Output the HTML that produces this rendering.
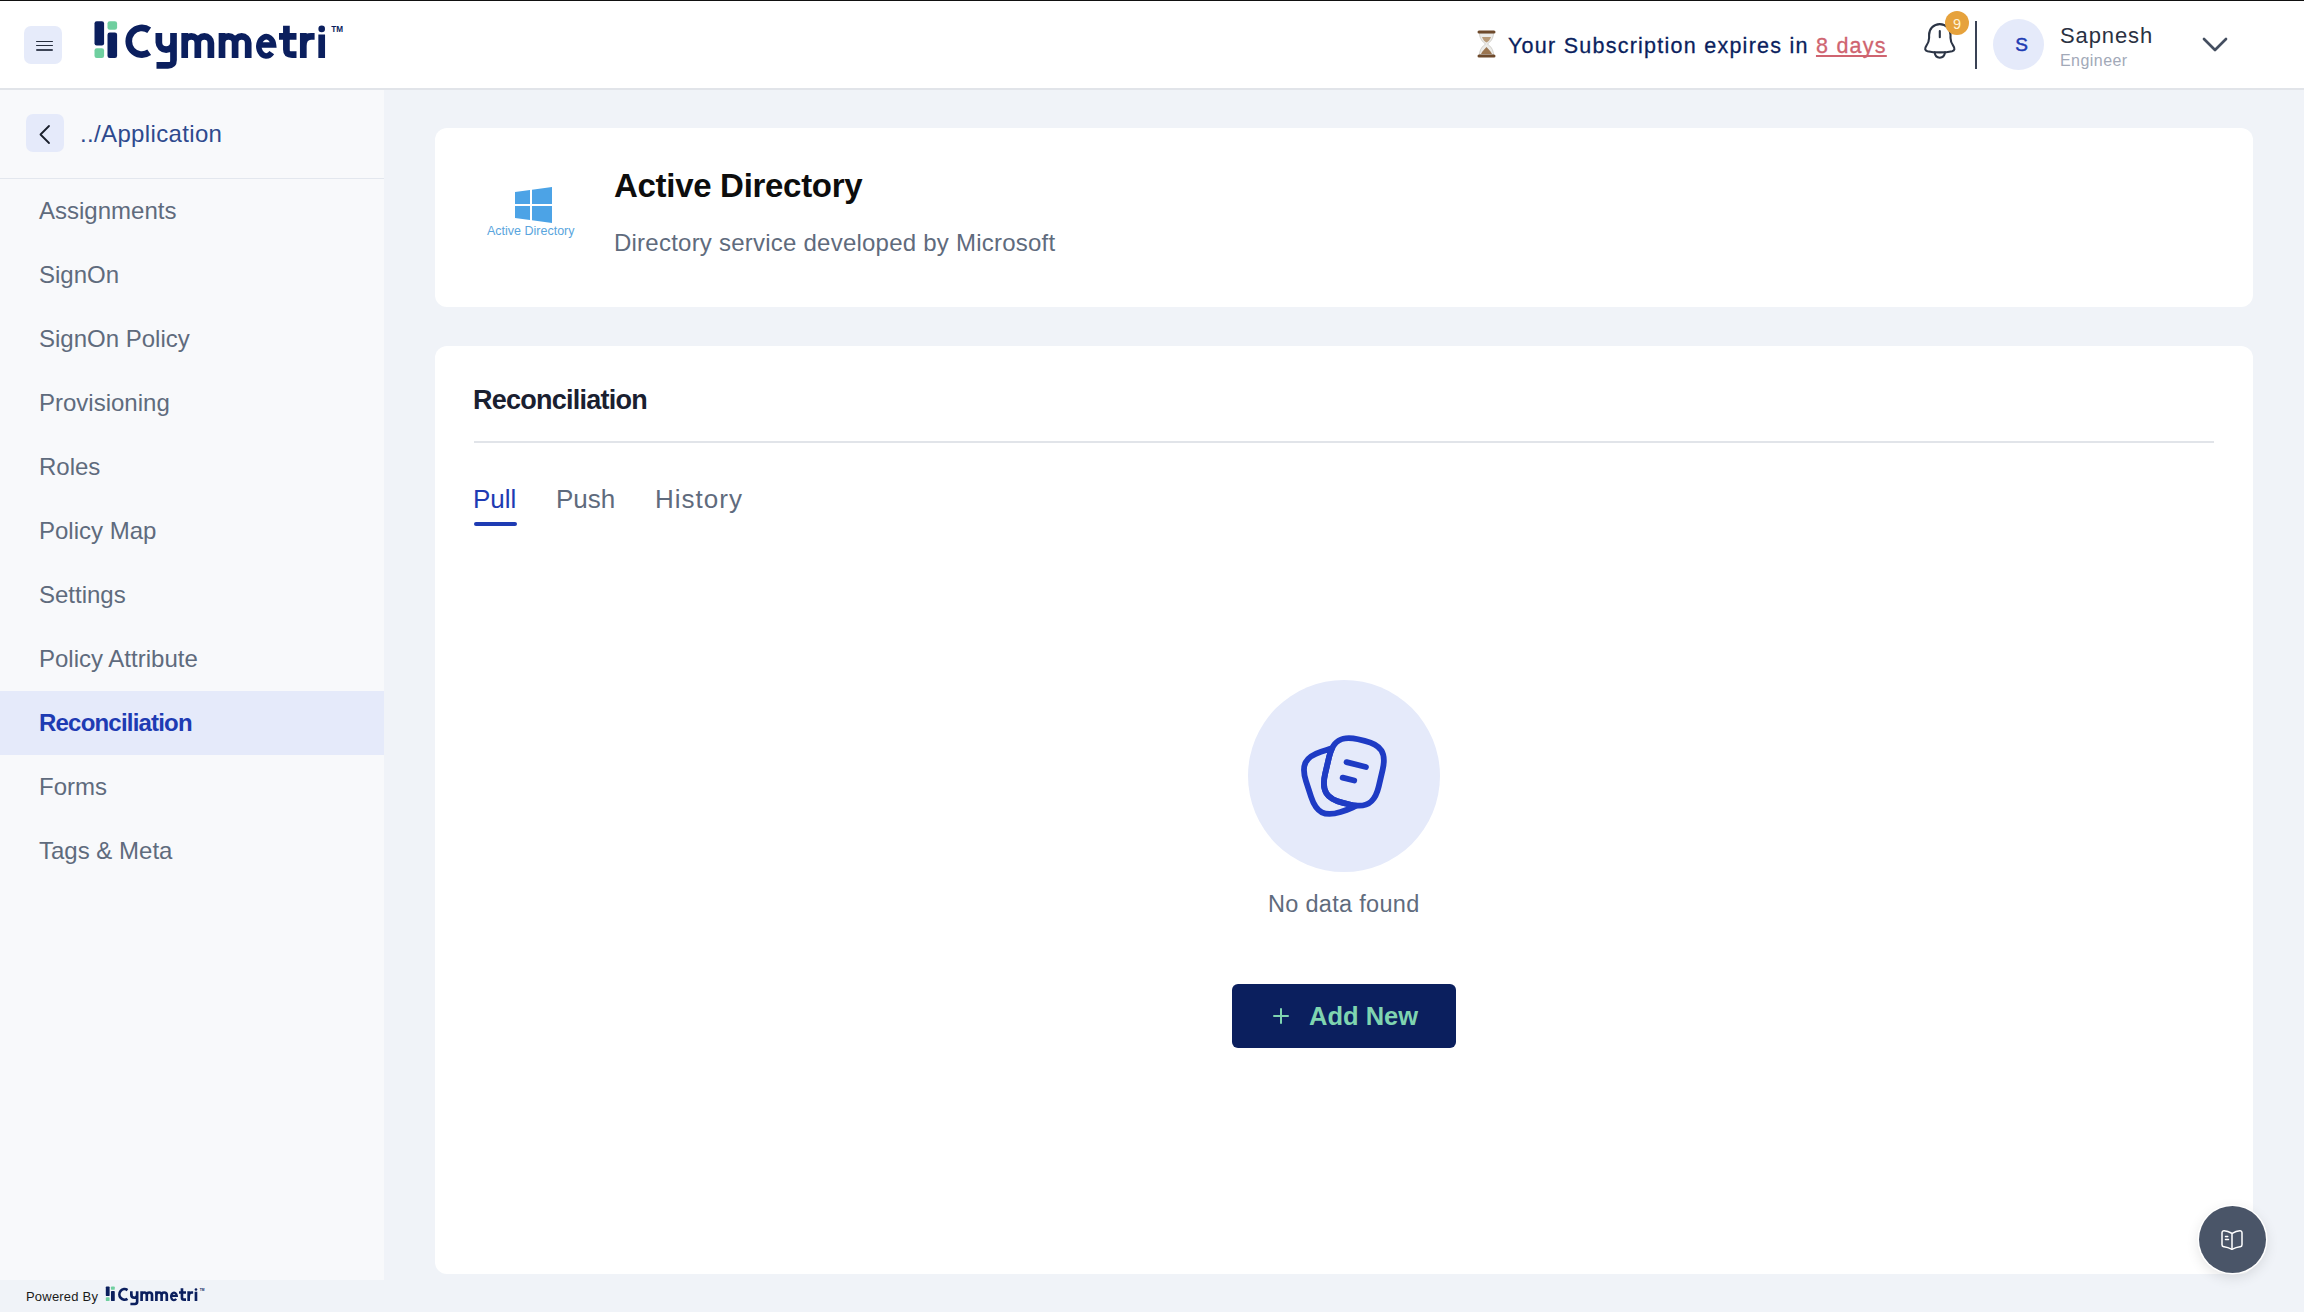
<!DOCTYPE html>
<html>
<head>
<meta charset="utf-8">
<style>
*{box-sizing:border-box;margin:0;padding:0}
html,body{width:2304px;height:1312px;overflow:hidden;background:#f0f3f8;font-family:"Liberation Sans",sans-serif}
.a{position:absolute;white-space:nowrap;line-height:1}
#topline{position:absolute;left:0;top:0;width:2304px;height:1px;background:#111}
#header{position:absolute;left:0;top:1px;width:2304px;height:89px;background:#fff;border-bottom:2px solid #e1e4e9}
#sidebar{position:absolute;left:0;top:90px;width:384px;height:1190px;background:#f8f9fb}
.card{position:absolute;background:#fff;border-radius:12px}
.nav{position:absolute;left:0;width:384px;height:64px}
.nav span{position:absolute;left:39px;top:20px;font-size:24px;line-height:24px;color:#5f6b7d}
.nav.act{background:#e5eafa}
.nav.act span{color:#1e3bb3;font-weight:700;letter-spacing:-0.8px}
</style>
</head>
<body>
<div id="topline"></div>
<div id="header"></div>

<!-- hamburger -->
<div class="a" style="left:24px;top:26px;width:38px;height:38px;border-radius:7px;background:#e6ebfa"></div>
<div class="a" style="left:35.5px;top:40.5px;width:17px;height:1.7px;border-radius:1px;background:#262d3d"></div>
<div class="a" style="left:35.5px;top:44.8px;width:17px;height:1.7px;border-radius:1px;background:#262d3d"></div>
<div class="a" style="left:35.5px;top:49.1px;width:17px;height:1.7px;border-radius:1px;background:#3d4456"></div>

<!-- logo -->
<svg class="a" style="left:90px;top:15px" width="260" height="60" viewBox="90 15 260 60">
<g fill="none" stroke="#0b1f5e" stroke-width="6.7">
<path d="M149.20 30.20 A13.1 13.35 0 1 0 149.20 52.30 M158.85 33.10 L158.85 42.50 A7.33 7.33 0 0 0 173.50 42.50 M173.50 33.10 L173.50 60.00 C173.50 64.20 172.00 65.30 168.00 65.30 L156.50 65.30 M184.70 57.90 L184.70 33.10 M184.70 42.95 A6.55 6.55 0 0 1 197.80 42.95 L197.80 57.90 M197.80 42.95 A6.55 6.55 0 0 1 210.90 42.95 L210.90 57.90 M222.00 57.90 L222.00 33.10 M222.00 42.95 A6.55 6.55 0 0 1 235.10 42.95 L235.10 57.90 M235.10 42.95 A6.55 6.55 0 0 1 248.20 42.95 L248.20 57.90 M286.40 25.70 L286.40 49.50 C286.40 54.00 288.50 54.55 292.00 54.55 L296.50 54.55 M279.00 36.45 L296.50 36.45 M303.30 57.90 L303.30 33.10 M303.30 46.00 C303.30 39.50 306.00 36.45 311.00 36.45 L314.60 36.45 M321.70 34.60 L321.70 57.90"/>
</g>
<path d="M258.65 45.00 L273.50 45.00 A7.35 9.6 0 1 0 271.80 52.60" fill="none" stroke="#0b1f5e" stroke-width="5.6"/>
<circle cx="321.7" cy="28.9" r="3.3" fill="#0b1f5e"/>
<rect x="94.5" y="21.2" width="9.6" height="24.3" rx="2.2" fill="#0b1f5e"/>
<rect x="94.5" y="48.3" width="9.6" height="9.6" rx="2.2" fill="#6fcf9f"/>
<rect x="107.5" y="21.2" width="9.6" height="8.5" rx="2.2" fill="#6fcf9f"/>
<rect x="107.5" y="32.5" width="9.6" height="25.4" rx="2.2" fill="#0b1f5e"/>
<text x="331.3" y="32" font-family="Liberation Sans" font-weight="700" font-size="8.2" fill="#0b1f5e">TM</text>
</svg>

<!-- subscription -->
<svg class="a" style="left:1476px;top:30px" width="21" height="28" viewBox="0 0 21 28">
<path d="M3.5 3 L17.5 3 C17.5 9 14 12 11.5 14 C14 16 17.5 19 17.5 25 L3.5 25 C3.5 19 7 16 9.5 14 C7 12 3.5 9 3.5 3 Z" fill="#ecebe8" stroke="#c9c6c0" stroke-width="0.8"/>
<path d="M6 7 L15 7 C14 10 12 12 10.5 12.5 C9 12 7 10 6 7 Z" fill="#b89a78"/>
<path d="M10.5 17 C9 19 6 21 5 24 L16 24 C15 21 12 19 10.5 17 Z" fill="#9b7550"/>
<rect x="1.5" y="0.5" width="18" height="3" rx="1.5" fill="#6e4a2c"/>
<rect x="1.5" y="24.5" width="18" height="3" rx="1.5" fill="#6e4a2c"/>
</svg>
<div class="a" style="left:1508px;top:35.5px;font-size:21.5px;letter-spacing:1.25px;color:#0b1f5e;-webkit-text-stroke:0.3px #0b1f5e">Your Subscription expires in <span style="color:#cf6470;-webkit-text-stroke:0.3px #cf6470;text-decoration:underline;text-decoration-thickness:1.5px;text-underline-offset:2px;text-decoration-skip-ink:none">8 days</span></div>

<!-- bell -->
<svg class="a" style="left:1918px;top:18px" width="44" height="44" viewBox="0 0 44 44">
<g fill="none" stroke="#2b3445" stroke-width="2.1" stroke-linecap="round" stroke-linejoin="round">
<path d="M21.8 6.1 C15.5 6.1 11.1 11 11.1 17 L11.1 20 C11.1 23.5 10 25.5 8.3 27.8 C6.5 30.3 6.8 32.5 9.5 33.2 C13 34 17 34.4 21.8 34.4 C26.6 34.4 30.6 34 34.1 33.2 C36.8 32.5 37.1 30.3 35.3 27.8 C33.6 25.5 32.5 23.5 32.5 20 L32.5 17 C32.5 11 28.1 6.1 21.8 6.1 Z"/>
<path d="M16.6 34.4 C17.1 38 19 39.7 21.8 39.7 C24.6 39.7 26.5 38 27 34.4"/>
<line x1="21.8" y1="13" x2="21.8" y2="19.3"/>
</g>
</svg>
<div class="a" style="left:1945px;top:11px;width:24px;height:24px;border-radius:12px;background:#e6a23c;color:#fff4d8;font-size:14.5px;line-height:26px;text-align:center">9</div>
<div class="a" style="left:1975px;top:21px;width:2px;height:48px;background:#394255"></div>

<!-- avatar -->
<div class="a" style="left:1993px;top:19px;width:51px;height:51px;border-radius:50%;background:#e5eafa;color:#1e3bb3;font-size:19px;font-weight:400;-webkit-text-stroke:0.5px #1e3bb3;line-height:51px;text-align:center;padding-left:6px">S</div>
<div class="a" style="left:2060px;top:25px;font-size:22px;letter-spacing:0.9px;color:#2a3142">Sapnesh</div>
<div class="a" style="left:2060px;top:53px;font-size:16px;letter-spacing:0.45px;color:#a2a9b8">Engineer</div>
<svg class="a" style="left:2200px;top:34px" width="30" height="20" viewBox="0 0 30 20">
<polyline points="4,5 15,16 26,5" fill="none" stroke="#444e60" stroke-width="2.7" stroke-linecap="round" stroke-linejoin="round"/>
</svg>

<!-- sidebar -->
<div id="sidebar">
</div>
<div class="a" style="left:26px;top:114px;width:38px;height:38px;border-radius:7px;background:#e5eafa"></div>
<svg class="a" style="left:26px;top:114px" width="38" height="38" viewBox="0 0 38 38">
<polyline points="23,12 14.5,20.5 23,29" fill="none" stroke="#1a1f2c" stroke-width="1.8" stroke-linecap="round" stroke-linejoin="round"/>
</svg>
<div class="a" style="left:80px;top:122px;font-size:24px;letter-spacing:0.35px;color:#2e4a8e">../Application</div>
<div class="a" style="left:0;top:178px;width:384px;height:1px;background:#e3e7ee"></div>

<div class="nav" style="top:179px"><span>Assignments</span></div>
<div class="nav" style="top:243px"><span>SignOn</span></div>
<div class="nav" style="top:307px"><span>SignOn Policy</span></div>
<div class="nav" style="top:371px"><span>Provisioning</span></div>
<div class="nav" style="top:435px"><span>Roles</span></div>
<div class="nav" style="top:499px"><span>Policy Map</span></div>
<div class="nav" style="top:563px"><span>Settings</span></div>
<div class="nav" style="top:627px"><span>Policy Attribute</span></div>
<div class="nav act" style="top:691px"><span>Reconciliation</span></div>
<div class="nav" style="top:755px"><span>Forms</span></div>
<div class="nav" style="top:819px"><span>Tags &amp; Meta</span></div>

<!-- footer -->
<div class="a" style="left:26px;top:1290px;font-size:13px;letter-spacing:0.2px;color:#1a1a1a">Powered By</div>
<svg class="a" style="left:104.21px;top:1283.94px" width="103.22" height="23.82" viewBox="90 15 260 60">
<g fill="none" stroke="#0b1f5e" stroke-width="6.7">
<path d="M149.20 30.20 A13.1 13.35 0 1 0 149.20 52.30 M158.85 33.10 L158.85 42.50 A7.33 7.33 0 0 0 173.50 42.50 M173.50 33.10 L173.50 60.00 C173.50 64.20 172.00 65.30 168.00 65.30 L156.50 65.30 M184.70 57.90 L184.70 33.10 M184.70 42.95 A6.55 6.55 0 0 1 197.80 42.95 L197.80 57.90 M197.80 42.95 A6.55 6.55 0 0 1 210.90 42.95 L210.90 57.90 M222.00 57.90 L222.00 33.10 M222.00 42.95 A6.55 6.55 0 0 1 235.10 42.95 L235.10 57.90 M235.10 42.95 A6.55 6.55 0 0 1 248.20 42.95 L248.20 57.90 M286.40 25.70 L286.40 49.50 C286.40 54.00 288.50 54.55 292.00 54.55 L296.50 54.55 M279.00 36.45 L296.50 36.45 M303.30 57.90 L303.30 33.10 M303.30 46.00 C303.30 39.50 306.00 36.45 311.00 36.45 L314.60 36.45 M321.70 34.60 L321.70 57.90"/>
</g>
<path d="M258.65 45.00 L273.50 45.00 A7.35 9.6 0 1 0 271.80 52.60" fill="none" stroke="#0b1f5e" stroke-width="5.6"/>
<circle cx="321.7" cy="28.9" r="3.3" fill="#0b1f5e"/>
<rect x="94.5" y="21.2" width="9.6" height="24.3" rx="2.2" fill="#0b1f5e"/>
<rect x="94.5" y="48.3" width="9.6" height="9.6" rx="2.2" fill="#6fcf9f"/>
<rect x="107.5" y="21.2" width="9.6" height="8.5" rx="2.2" fill="#6fcf9f"/>
<rect x="107.5" y="32.5" width="9.6" height="25.4" rx="2.2" fill="#0b1f5e"/>
<text x="331.3" y="32" font-family="Liberation Sans" font-weight="700" font-size="8.2" fill="#0b1f5e">TM</text>
</svg>

<!-- card 1 -->
<div class="card" style="left:435px;top:128px;width:1818px;height:179px"></div>
<svg class="a" style="left:515px;top:187px" width="37" height="36" viewBox="0 0 37 36">
<path d="M0 5 L15 3 L15 17 L0 17 Z M17 2.7 L37 0 L37 17 L17 17 Z M0 19 L15 19 L15 33 L0 31 Z M17 19 L37 19 L37 36 L17 33.3 Z" fill="#4ca3e6"/>
</svg>
<div class="a" style="left:487px;top:225px;font-size:12.5px;color:#5aa5dd">Active Directory</div>
<div class="a" style="left:614px;top:169.2px;font-size:33px;font-weight:700;letter-spacing:-0.3px;color:#0d0d0d">Active Directory</div>
<div class="a" style="left:614px;top:231px;font-size:24px;letter-spacing:0.23px;color:#5f6b7d">Directory service developed by Microsoft</div>

<!-- card 2 -->
<div class="card" style="left:435px;top:346px;width:1818px;height:928px"></div>
<div class="a" style="left:473px;top:387.1px;font-size:27px;font-weight:700;letter-spacing:-0.75px;color:#1a2030">Reconciliation</div>
<div class="a" style="left:474px;top:441px;width:1740px;height:2px;background:#e1e4e9"></div>
<div class="a" style="left:473px;top:486px;font-size:26px;color:#1e3bb3">Pull</div>
<div class="a" style="left:556px;top:486px;font-size:26px;color:#5f6b7d">Push</div>
<div class="a" style="left:655px;top:486px;font-size:26px;letter-spacing:1px;color:#5f6b7d">History</div>
<div class="a" style="left:474px;top:522px;width:43px;height:4px;border-radius:2px;background:#1e3bb3"></div>

<!-- empty state -->
<div class="a" style="left:1248px;top:680px;width:192px;height:192px;border-radius:50%;background:#e5eafa"></div>
<svg class="a" style="left:1296px;top:728px" width="96" height="96" viewBox="0 0 24 24">
<g fill="none" stroke="#1e3bc4" stroke-width="1.45" stroke-linecap="round" stroke-linejoin="round">
<path d="M21.66 10.44L20.68 14.62C19.84 18.23 18.18 19.69 15.06 19.39C14.56 19.35 14.02 19.26 13.44 19.12L11.76 18.72C7.59 17.73 6.3 15.67 7.28 11.49L8.26 7.3C8.46 6.45 8.7 5.71 9 5.1C10.17 2.68 12.16 2.03 15.5 2.82L17.17 3.21C21.36 4.19 22.64 6.26 21.66 10.44Z"/>
<path d="M15.06 19.39C14.44 19.81 13.66 20.16 12.71 20.47L11.13 20.99C7.16 22.27 5.07 21.2 3.78 17.23L2.5 13.28C1.22 9.31 2.28 7.21 6.25 5.93L7.83 5.41C8.24 5.28 8.63 5.17 9 5.1C8.7 5.71 8.46 6.45 8.26 7.3L7.28 11.49C6.3 15.67 7.59 17.73 11.76 18.72L13.44 19.12C14.02 19.26 14.56 19.35 15.06 19.39Z"/>
<path d="M12.64 8.53L17.49 9.76"/>
<path d="M11.66 12.4L14.56 13.14"/>
</g>
</svg>
<div class="a" style="left:1268px;top:893px;font-size:23.5px;letter-spacing:0.3px;color:#5f6b7d">No data found</div>
<div class="a" style="left:1232px;top:984px;width:224px;height:64px;border-radius:6px;background:#0b1f5e"></div>
<div class="a" style="left:1273px;top:1014.8px;width:15.6px;height:2.5px;border-radius:1px;background:#7fd4b0"></div>
<div class="a" style="left:1279.55px;top:1008.3px;width:2.5px;height:15.6px;border-radius:1px;background:#7fd4b0"></div>
<div class="a" style="left:1309px;top:1004px;font-size:25.5px;font-weight:700;color:#7fd4b0">Add New</div>

<!-- help button -->
<div class="a" style="left:2199px;top:1206px;width:67px;height:67px;border-radius:50%;background:#4a5568;box-shadow:0 0 0 1.5px #fff,0 4px 14px rgba(0,0,0,0.12)"></div>
<svg class="a" style="left:2220px;top:1228px" width="24" height="24" viewBox="0 0 24 24">
<g fill="none" stroke="#fff" stroke-width="1.5" stroke-linecap="round" stroke-linejoin="round">
<path d="M22 16.74V4.67c0-1.2-.98-2.09-2.17-1.99h-.06c-2.1.18-5.29 1.25-7.07 2.37l-.17.11c-.29.18-.77.18-1.06 0l-.25-.15C9.440 3.9 6.26 2.84 4.16 2.67 2.97 2.57 2 3.47 2 4.66v12.08c0 .96.78 1.86 1.74 1.98l.29.04c2.17.29 5.52 1.39 7.44 2.44l.04.02c.27.15.7.15.96 0 1.92-1.06 5.28-2.17 7.46-2.46l.33-.04c.96-.12 1.740-1.02 1.74-1.98z"/>
<path d="M12 5.49v15M7.75 8.49H5.5M8.5 11.49h-3"/>
</g>
</svg>
</body>
</html>
